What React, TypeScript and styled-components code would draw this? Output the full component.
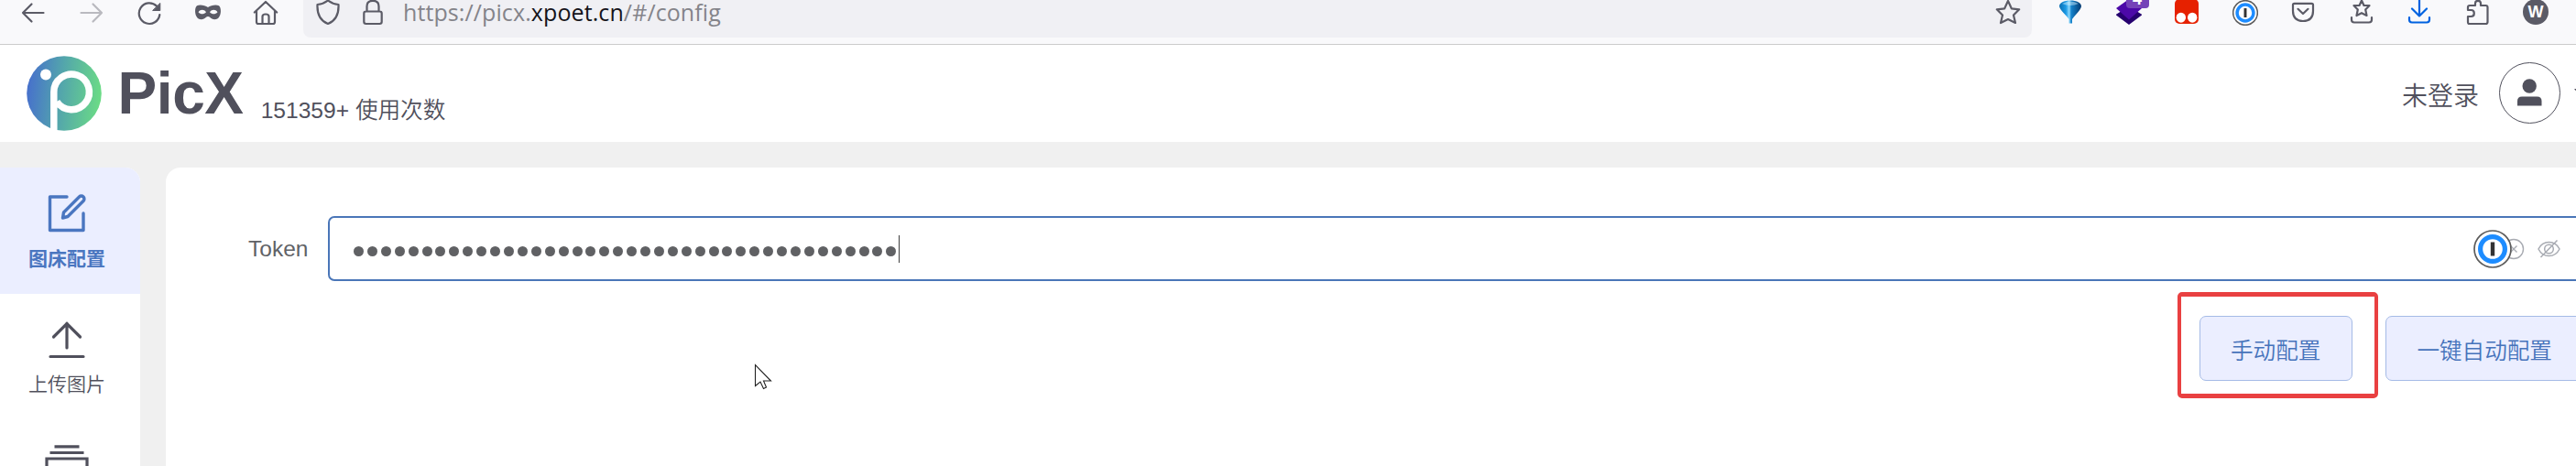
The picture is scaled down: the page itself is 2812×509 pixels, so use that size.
import React from "react";
import styled, { createGlobalStyle, css } from "styled-components";

const GlobalStyle = createGlobalStyle`
  * { box-sizing: border-box; }
  body {
    margin: 0;
    overflow: hidden;
    background: #f0f0f0;
    font-family: "Liberation Sans", "Noto Sans CJK SC", sans-serif;
    color: #50505c;
  }
  svg { display: block; flex: none; }
`;

const Window = styled.div`
  width: 2812px;
  height: 509px;
  overflow: hidden;
  display: flex;
  flex-direction: column;
`;

/* ---------- browser toolbar ---------- */

const Toolbar = styled.div`
  height: 49px;
  flex: none;
  display: flex;
  align-items: flex-start;
  padding-left: 22px;
  background: #f9f9fb;
  border-bottom: 1px solid #cccccc;
`;

const IconGroup = styled.div`
  display: flex;
  gap: 35.5px;
`;

const AddressBar = styled.div`
  width: 1887px;
  height: 41px;
  margin: 0 28px 0 27px;
  padding: 0 12px 0 13px;
  display: flex;
  background: #f0f0f4;
  border-radius: 0 0 8px 8px;
`;

const Lock = styled.div`
  margin: 0 19px 0 21px;
`;

const Url = styled.div`
  flex: 1;
  font-family: "Open Sans", "Noto Sans", sans-serif;
  font-size: 25px;
  line-height: 26px;
  letter-spacing: 0.1px;
  color: #84848a;
  white-space: nowrap;
  strong {
    font-weight: 400;
    color: #15141a;
  }
`;

function ToolIcon({ children, color = "#5b5b66", width = 2.2 }: { children: React.ReactNode; color?: string; width?: number }) {
  return (
    <svg width="28" height="28" viewBox="0 0 28 28" fill="none" stroke={color} strokeWidth={width} strokeLinecap="round" strokeLinejoin="round">
      {children}
    </svg>
  );
}

const ProfileMark = styled.div`
  width: 28px;
  height: 28px;
  margin-top: -1px;
  border-radius: 50%;
  background: #5b5b66;
  color: #fff;
  font: 700 18px/28px "Liberation Sans", sans-serif;
  text-align: center;
`;

const BadgeHost = styled.div`
  position: relative;
`;

const Badge = styled.span`
  position: absolute;
  left: 11px;
  top: -14px;
  width: 25px;
  height: 23px;
  border-radius: 4px;
  background: #7442b8;
  color: #fff;
  font: 700 18px/26px "Liberation Sans", sans-serif;
  text-align: center;
`;

/* ---------- site header ---------- */

const Header = styled.header`
  height: 106px;
  flex: none;
  display: flex;
  align-items: center;
  padding: 0 0 0 28.5px;
  background: #fff;
`;

const Brand = styled.h1`
  margin: 0 0 0 18px;
  font-size: 64px;
  line-height: 72px;
  font-weight: 700;
  letter-spacing: -0.4px;
`;

const Usage = styled.div`
  margin: 37px auto 0 19px;
  font-size: 24.6px;
  line-height: 32px;
  font-weight: 350;
`;

const Account = styled.div`
  display: flex;
  align-items: center;
  margin-right: -12px;
  padding-bottom: 2px;
  font-size: 28px;
  font-weight: 350;
`;

const AccountName = styled.span`
  margin-top: 4px;
`;

const Avatar = styled.div`
  width: 67px;
  height: 67px;
  margin: 0 15px 0 22px;
  border: 1px solid #50505c;
  border-radius: 50%;
  display: grid;
  place-items: center;
`;

/* ---------- content ---------- */

const Body = styled.div`
  flex: 1;
  min-height: 0;
  display: flex;
  gap: 28px;
  padding-top: 28px;
`;

const Sidebar = styled.nav`
  width: 153px;
  flex: none;
  overflow: hidden;
  background: #fff;
  border-radius: 0 16px 0 0;
`;

const NavItem = styled.a<{ $active?: boolean }>`
  height: 138px;
  display: flex;
  flex-direction: column;
  align-items: center;
  padding: 27px 7px 0 0;
  gap: 13px;
  font-size: 21px;
  line-height: 30px;
  font-weight: 350;
  ${(p) =>
    p.$active &&
    css`
      gap: 14px;
      background: #ebeeff;
      color: #4a76c0;
      font-weight: 700;
    `}
`;

const Card = styled.main`
  width: 2680px;
  flex: none;
  background: #fff;
  border-radius: 16px 0 0 0;
  padding: 53px 0 0 90px;
`;

const Field = styled.div`
  display: flex;
  align-items: center;
`;

const Label = styled.label`
  width: 87px;
  flex: none;
  font-size: 24.5px;
  color: #606266;
`;

const TokenInput = styled.div`
  width: 2490px;
  height: 71px;
  display: flex;
  align-items: center;
  padding: 0 0 0 26px;
  border: 2px solid #4a76b8;
  border-radius: 7px;
`;

const Dots = styled.div`
  display: flex;
  gap: 3.92px;
  padding-top: 6px;
`;

const Dot = styled.i`
  width: 11px;
  height: 11px;
  border-radius: 50%;
  background: #606164;
`;

const Caret = styled.span`
  width: 1px;
  height: 30px;
  margin: 0 1718.5px 0 2.5px;
  background: #404040;
`;

const Actions = styled.div`
  display: flex;
  gap: 36px;
  margin: 38px 0 0 2130px;
`;

const ActionSlot = styled.div`
  position: relative;
`;

const Button = styled.button`
  height: 71px;
  padding: 0 34px 0 33px;
  border: 1px solid #a5bbe6;
  border-radius: 7px;
  background: #ebeeff;
  color: #4673bb;
  font-family: "Liberation Sans", "Noto Sans CJK SC", sans-serif;
  font-size: 24.6px;
  font-weight: 350;
  white-space: nowrap;
`;

const Highlight = styled.span`
  position: absolute;
  left: -24px;
  top: -26px;
  width: 219px;
  height: 116px;
  border: 4px solid #e94041;
  border-top-width: 5px;
  border-bottom-width: 5px;
  border-radius: 5px;
`;

const Pointer = styled.svg`
  position: absolute;
  left: 823px;
  top: 397px;
`;

const starPath = "M14 1 L17.8 9.3 L26.2 10.3 L20 16.5 L22 25 L14 21 L6 25 L8 16.5 L1.8 10.3 L10.2 9.3 Z";

function Logo() {
  return (
    <svg width="82" height="82" viewBox="0 0 82 82">
      <defs>
        <linearGradient id="brand" x1="0" x2="1" y1="0.45" y2="0.55">
          <stop offset="0" stopColor="#4770cc" />
          <stop offset="0.45" stopColor="#53a5ac" />
          <stop offset="1" stopColor="#6bdc85" />
        </linearGradient>
      </defs>
      <circle cx="41" cy="41" r="40.8" fill="url(#brand)" />
      <circle cx="21" cy="20.5" r="6" fill="#fff" />
      <path d="M29.8 82 V39.5 A19.3 19.3 0 1 1 33 50" fill="none" stroke="#fff" strokeWidth="7.5" />
    </svg>
  );
}

function OnePassword({ size }: { size: number }) {
  return (
    <svg width={size} height={size} viewBox="0 0 42 42">
      <circle cx="21" cy="21" r="20" fill="#fff" stroke="#5c5c5c" strokeWidth={size > 30 ? 1.7 : 2.4} />
      <circle cx="21" cy="21" r="13.4" fill="#fff" stroke="#1d8cff" strokeWidth="5.2" />
      <rect x="18.8" y="13.5" width="4.4" height="15" fill="#333" />
    </svg>
  );
}

const FieldIcons = styled.div`
  display: flex;
  align-items: center;
  svg + svg { margin-left: -10px; }
  svg:first-child { position: relative; z-index: 1; }
  svg:last-child { margin-left: 14px; }
`;

export default function App() {
  return (
    <Window>
      <GlobalStyle />
      <Toolbar>
        <IconGroup>
          <ToolIcon><path d="M3 14H25.5M12.5 4.5L3 14L12.5 23.5" /></ToolIcon>
          <ToolIcon color="#b9b9bf"><path d="M2.5 14H25M15.5 4.5L25 14L15.5 23.5" /></ToolIcon>
          <ToolIcon>
            <path d="M22 6.6A11.3 11.3 0 1 0 25.3 16" />
            <path d="M25.8 3.8V11.5H18Z" fill="#5b5b66" strokeWidth="1" />
          </ToolIcon>
          <ToolIcon>
            <path
              fillRule="evenodd"
              fill="#5b5b66"
              stroke="none"
              d="M14 8C17 5.8 23 4.6 26 6.3C28.4 8 28.6 14.5 26.5 18C24.5 22 19 22.2 16 18.8C15 17.8 13 17.8 12 18.8C9 22.2 3.5 22 1.5 18C-.6 14.5-.4 8 2 6.3C5 4.6 11 5.8 14 8ZM3.5 13.2C6 16 9.5 16 12 13.2C9.5 10 6 10 3.5 13.2ZM16 13.2C18.5 16 22 16 24.5 13.2C22 10 18.5 10 16 13.2Z"
            />
          </ToolIcon>
          <ToolIcon><path d="M1.8 13.5L14 2L26.2 13.5M4 11.5V24Q4 26 6 26H22Q24 26 24 24V11.5M10.5 26V18Q10.5 15.5 14 15.5Q17.5 15.5 17.5 18V26" /></ToolIcon>
        </IconGroup>
        <AddressBar>
          <ToolIcon><path d="M14 .5C17 3 21 4.5 25.5 5C26 15 22.5 22.5 14 26C5.5 22.5 2 15 2.5 5C7 4.5 11 3 14 .5Z" /></ToolIcon>
          <Lock>
            <ToolIcon><path d="M7.5 12.5V7Q7.5 .8 14 .8Q20.5 .8 20.5 7V12.5M6.5 12.5H21.5Q23.7 12.5 23.7 14.7V23.8Q23.7 26 21.5 26H6.5Q4.3 26 4.3 23.8V14.7Q4.3 12.5 6.5 12.5Z" /></ToolIcon>
          </Lock>
          <Url>https://picx.<strong>xpoet.cn</strong>/#/config</Url>
          <ToolIcon><path d={starPath} /></ToolIcon>
        </AddressBar>
        <IconGroup>
          <svg width="28" height="28" viewBox="0 0 28 28">
            <defs>
              <linearGradient id="balloon" x1="0" x2="1" y1="0" y2="0">
                <stop offset="0" stopColor="#0a6db0" />
                <stop offset="0.3" stopColor="#1a9ae6" />
                <stop offset="0.45" stopColor="#8fd8fb" />
                <stop offset="0.54" stopColor="#1583cc" />
                <stop offset="1" stopColor="#053a70" />
              </linearGradient>
            </defs>
            <path d="M2 7C2 3 7 .5 14 .5C21 .5 26 3 26 7C25 12 19 16 16 21V25.5H12.5V21C9.500 16 3 12 2 7Z" fill="url(#balloon)" />
            <path d="M5 4Q14-1 23 4Q14 8 5 4Z" fill="#dff6ff" opacity=".45" />
          </svg>
          <BadgeHost>
            <svg width="28" height="28" viewBox="0 0 28 28">
              <path d="M-.5 16L14 7L28.5 16L14 27Z" fill="#26006f" />
              <path d="M0 9L14-1L28 9L14 21.5Z" fill="#4c09a8" />
            </svg>
            <Badge>4</Badge>
          </BadgeHost>
          <svg width="28" height="28" viewBox="0 0 28 28">
            <rect x="1" y="-1" width="26" height="27" rx="5" fill="#e62100" />
            <ellipse cx="7.8" cy="19.2" rx="5.2" ry="5.5" fill="#fff" />
            <ellipse cx="20.2" cy="19.2" rx="5.2" ry="5.5" fill="#fff" />
          </svg>
          <OnePassword size={28} />
          <ToolIcon><path d="M4.5 3.8H23.5Q25 3.8 25 5.5V12Q25 23 14 23Q3 23 3 12V5.5Q3 3.8 4.5 3.8ZM8.5 9.8L14 15L19.5 9.8" /></ToolIcon>
          <ToolIcon>
            <path d="M14 .5L16.5 6H22.5L18.2 10.5L19.5 17L14 14.2L8.5 17L9.8 10.5L5.5 6H11.5Z" />
            <path d="M3 19V21.5Q3 24.5 6 24.5H22Q25 24.5 25 21.5V19" />
          </ToolIcon>
          <ToolIcon color="#0062e0">
            <path d="M14-1V17.5M6 9.5L14 17.5L22 9.5M3 19V21.5Q3 24.5 6 24.5H22Q25 24.5 25 21.5V19" />
          </ToolIcon>
          <ToolIcon><path d="M4.5 26H22.5Q24.5 26 24.5 24V8Q24.5 6 22.5 6H17V3.5Q17 .8 14 .8Q11 .8 11 3.5V6H5Q3 6 3 8V11H6.5Q9.8 11 9.8 14.5Q9.8 18 6.5 18H3V24Q3 26 4.5 26Z" /></ToolIcon>
          <ProfileMark>W</ProfileMark>
        </IconGroup>
      </Toolbar>

      <Header>
        <Logo />
        <Brand>PicX</Brand>
        <Usage>151359+ 使用次数</Usage>
        <Account>
          <AccountName>未登录</AccountName>
          <Avatar>
            <svg width="28" height="30" viewBox="0 0 28 30" fill="#50505c">
              <circle cx="13.2" cy="8" r="7.7" />
              <path d="M0 29.5V24.5Q0 19.5 5 19.5H21.5Q26.5 19.5 26.5 24.5V29.5Z" />
            </svg>
          </Avatar>
          <svg width="14" height="8" viewBox="0 0 14 8" fill="#50505c"><path d="M0 0H14L7 8Z" /></svg>
        </Account>
      </Header>

      <Body>
        <Sidebar>
          <NavItem $active>
            <svg width="44" height="44" viewBox="0 0 44 44" fill="none" stroke="#4a76c0" strokeWidth="3.4" strokeLinecap="round" strokeLinejoin="round">
              <path d="M22 5H3.5V41.5H40V23" />
              <path d="M17.5 28L18.5 22L35.5 5A3 3 0 0 1 40 9.5L23 26.5Z" />
            </svg>
            图床配置
          </NavItem>
          <NavItem>
            <svg width="44" height="44" viewBox="0 0 44 44" fill="none" stroke="#50505c" strokeWidth="3.2" strokeLinecap="round">
              <path d="M22 32V5M7.5 20L22 5.5L36.5 20M4 41.5H40" />
            </svg>
            上传图片
          </NavItem>
          <NavItem>
            <svg width="48" height="44" viewBox="0 0 48 44" fill="none" stroke="#50505c" strokeWidth="3.2">
              <path d="M10.5 1.8H37.5M5.5 8.5H42.5M2 44V15H46V44" />
            </svg>
          </NavItem>
        </Sidebar>
        <Card>
          <Field>
            <Label>Token</Label>
            <TokenInput>
              <Dots>
                {Array.from({ length: 40 }, (_, i) => (
                  <Dot key={i} />
                ))}
              </Dots>
              <Caret />
              <FieldIcons>
                <OnePassword size={42} />
                <svg width="24" height="24" viewBox="0 0 24 24" fill="none" stroke="#a8abb2" strokeWidth="1.4">
                  <circle cx="12" cy="12" r="10.5" />
                  <path d="M8.5 8.5L15.5 15.5M15.5 8.5L8.5 15.5" />
                </svg>
                <svg width="25" height="22" viewBox="0 0 25 22" fill="none" stroke="#a8abb2" strokeWidth="1.5">
                  <path d="M1 11C6 1 19 1 24 11C19 21 6 21 1 11ZM3.5 20L21.5 1.5" />
                  <circle cx="12.5" cy="11" r="4.8" />
                </svg>
              </FieldIcons>
            </TokenInput>
          </Field>
          <Actions>
            <ActionSlot>
              <Button>手动配置</Button>
              <Highlight />
            </ActionSlot>
            <Button>一键自动配置</Button>
          </Actions>
        </Card>
      </Body>
      <Pointer width="20" height="29" viewBox="0 0 20 29" fill="#fff" stroke="#222" strokeWidth="1.1">
        <path d="M1.5 1.5V24.5L7 20L10.5 27.5L13.5 26L10.5 19H18.5Z" />
      </Pointer>
    </Window>
  );
}
